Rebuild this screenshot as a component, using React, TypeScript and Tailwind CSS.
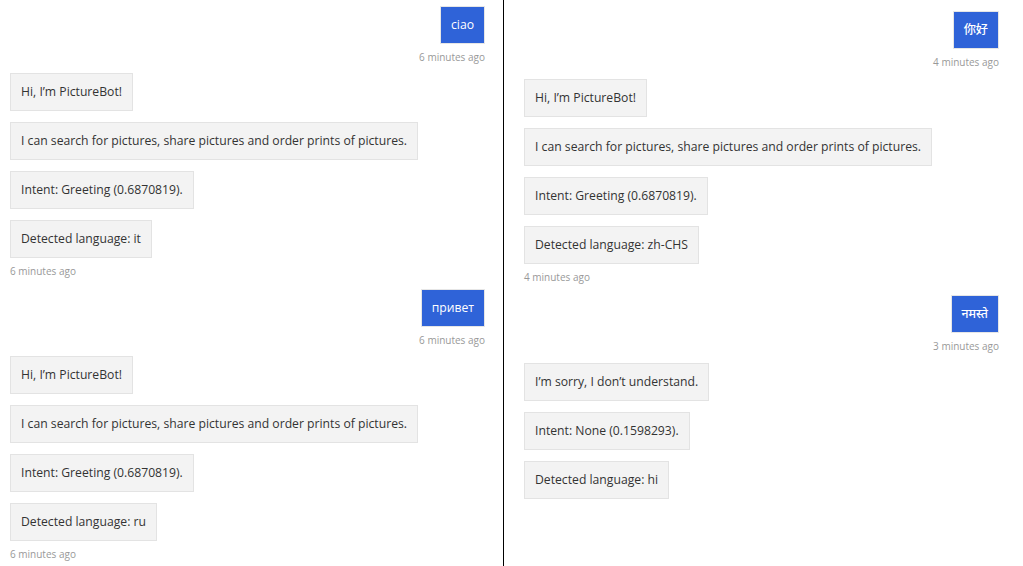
type Group = { from: "user" | "bot"; lines: string[]; time: string; mt?: string };

const left: Group[] = [
  { from: "user", lines: ["ciao"], time: "6 minutes ago" },
  {
    from: "bot",
    lines: [
      "Hi, I’m PictureBot!",
      "I can search for pictures, share pictures and order prints of pictures.",
      "Intent: Greeting (0.6870819).",
      "Detected language: it",
    ],
    time: "6 minutes ago",
  },
  { from: "user", lines: ["привет"], time: "6 minutes ago", mt: "mt-[2px]" },
  {
    from: "bot",
    lines: [
      "Hi, I’m PictureBot!",
      "I can search for pictures, share pictures and order prints of pictures.",
      "Intent: Greeting (0.6870819).",
      "Detected language: ru",
    ],
    time: "6 minutes ago",
  },
];

const right: Group[] = [
  { from: "user", lines: ["你好"], time: "4 minutes ago" },
  {
    from: "bot",
    lines: [
      "Hi, I’m PictureBot!",
      "I can search for pictures, share pictures and order prints of pictures.",
      "Intent: Greeting (0.6870819).",
      "Detected language: zh-CHS",
    ],
    time: "4 minutes ago",
  },
  { from: "user", lines: ["नमस्ते"], time: "3 minutes ago", mt: "mt-[1px]" },
  {
    from: "bot",
    lines: [
      "I’m sorry, I don’t understand.",
      "Intent: None (0.1598293).",
      "Detected language: hi",
    ],
    time: "",
  },
];

const MessageGroup = ({ group }: { group: Group }) => {
  const isUser = group.from === "user";
  return (
    <div className={`flex flex-col gap-[11px] ${isUser ? "items-end" : "items-start"} ${group.mt ?? ""}`}>
      {group.lines.map((line, i) => (
        <div
          key={i}
          className={
            isUser
              ? "h-[38px] flex items-center px-[10px] bg-[#2f63d8] border border-[#e6e6e6] text-white text-[12.2px] font-medium"
              : "h-[38px] flex items-center px-[10px] bg-[#f3f3f3] border border-[#e3e3e3] text-[#333] text-[12.2px]"
          }
        >
          {line}
        </div>
      ))}
      {group.time && (
        <div className="-mt-[4px] h-3 leading-3 text-[10px] text-[#999]">{group.time}</div>
      )}
    </div>
  );
};

const Chat = ({ groups, className }: { groups: Group[]; className: string }) => (
  <div className={`flex-1 flex flex-col overflow-hidden ${className}`}>
    {groups.map((g, i) => (
      <MessageGroup key={i} group={g} />
    ))}
  </div>
);

export default function App() {
  return (
    <div
      className="w-[1023px] h-[566px] flex bg-white overflow-hidden"
      style={{ fontFamily: '"Open Sans", "Noto Sans", "Noto Sans CJK SC", sans-serif' }}
    >
      <Chat groups={left} className="gap-[10px] pt-[6px] pl-[10px] pr-[18px]" />
      <div className="w-[1px] bg-black" />
      <Chat groups={right} className="gap-[11px] pt-[11px] pl-[20px] pr-[24px]" />
    </div>
  );
}
